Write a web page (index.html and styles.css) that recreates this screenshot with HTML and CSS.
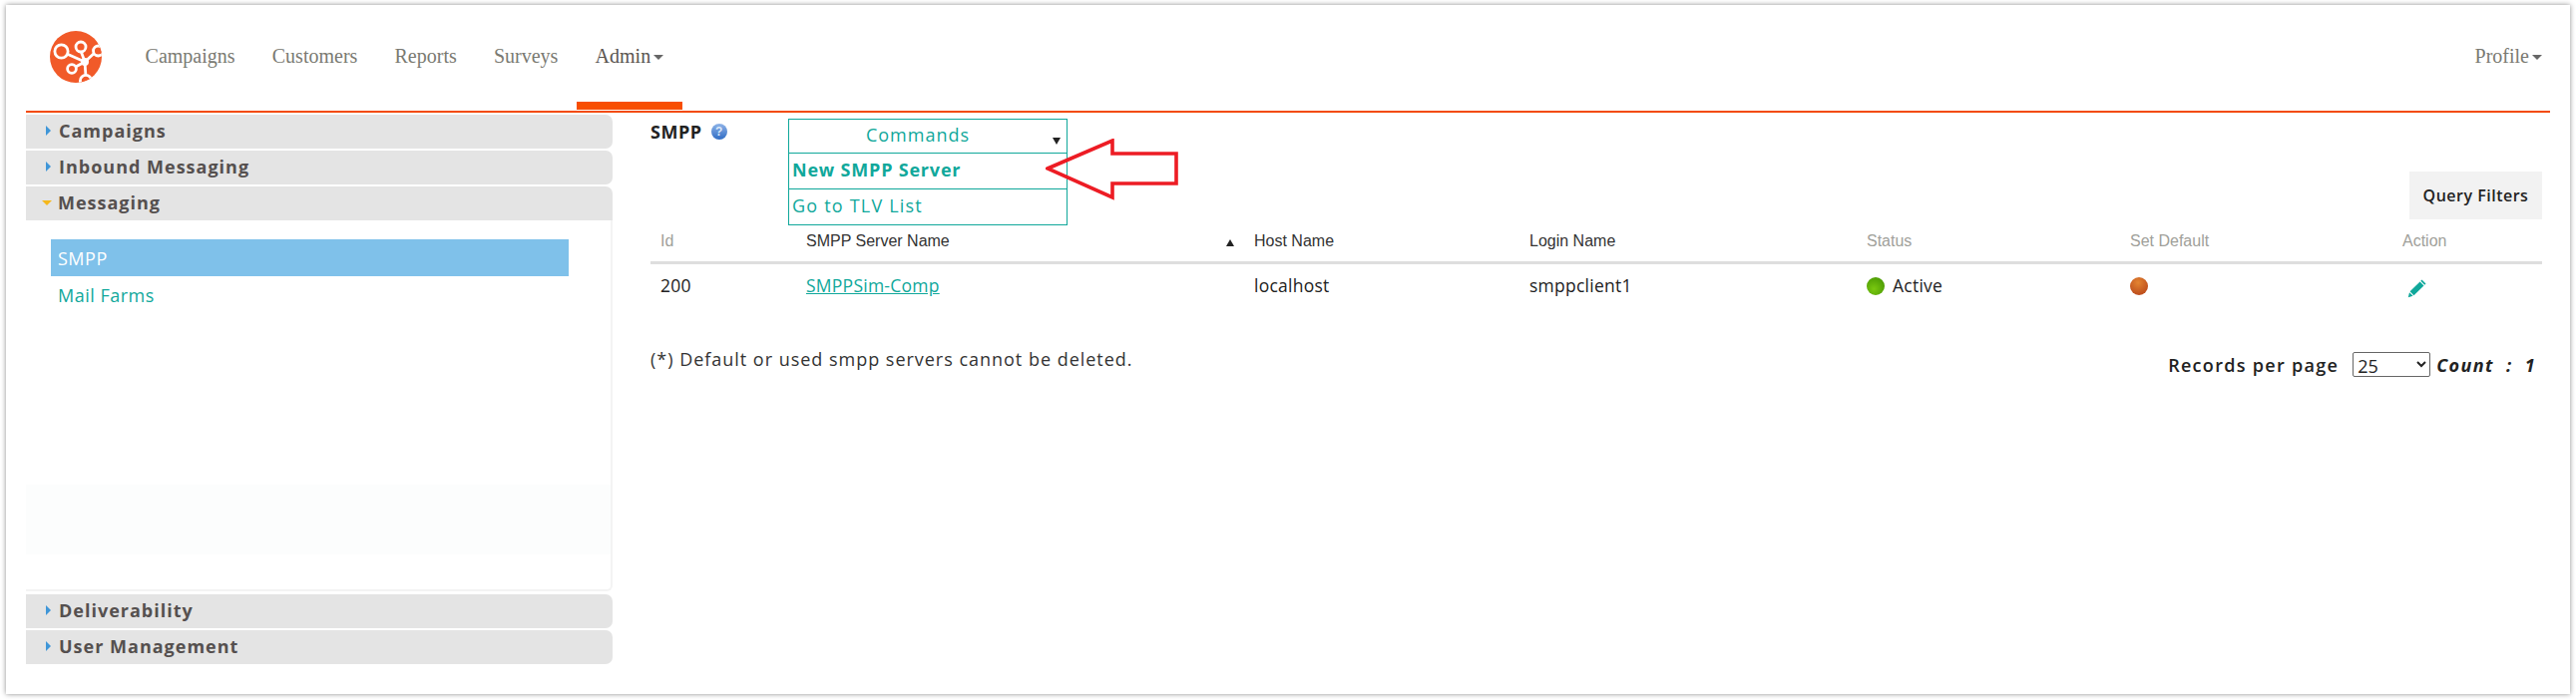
FILE: index.html
```html
<!DOCTYPE html>
<html lang="en">
<head>
<meta charset="utf-8">
<title>SMPP</title>
<link rel="stylesheet" href="styles.css">
</head>
<body>
<div class="card">
  <header class="topbar">
    <svg class="logo" viewBox="0 0 52 52" aria-hidden="true">
      <defs><clipPath id="logoclip"><circle cx="26" cy="26" r="26"/></clipPath></defs>
      <circle cx="26" cy="26" r="26" fill="#f15a29"/>
      <g clip-path="url(#logoclip)" fill="none" stroke="#fff" stroke-width="2.8">
        <path d="M17 23 L35 31 M31 20 L35 31 M24 37 L35 31 M47 20 L35 31 M36 46 L35 31"/>
        <circle cx="11.5" cy="20.5" r="6.6" fill="#f15a29"/>
        <circle cx="31" cy="16" r="5" fill="#f15a29"/>
        <circle cx="22" cy="38" r="4.4" fill="#f15a29"/>
        <circle cx="48.5" cy="20" r="5" fill="#f15a29"/>
        <circle cx="36" cy="50" r="5.6" fill="#f15a29"/>
        <circle cx="35" cy="31" r="4" fill="#fff" stroke="none"/>
      </g>
    </svg>
    <nav class="nav">
      <a class="nav-item">Campaigns</a>
      <a class="nav-item">Customers</a>
      <a class="nav-item">Reports</a>
      <a class="nav-item">Surveys</a>
      <a class="nav-item active">Admin<span class="caret"></span></a>
    </nav>
    <a class="nav-item profile">Profile<span class="caret"></span></a>
  </header>
  <div class="content">
    <aside class="sidebar">
      <div class="acc"><span class="tri"></span>Campaigns</div>
      <div class="acc"><span class="tri"></span>Inbound Messaging</div>
      <div class="acc open"><span class="tri"></span>Messaging</div>
      <div class="panel">
        <div class="side-link selected">SMPP</div>
        <div class="side-link">Mail Farms</div>
        <div class="band"></div>
      </div>
      <div class="acc"><span class="tri"></span>Deliverability</div>
      <div class="acc"><span class="tri"></span>User Management</div>
    </aside>
    <main class="main">
      <div class="toprow">
        <div class="title">SMPP
          <svg class="help" viewBox="0 0 18 18" aria-hidden="true">
            <defs><linearGradient id="hg" x1="0" y1="0" x2="0" y2="1"><stop offset="0" stop-color="#8fb4e8"/><stop offset="1" stop-color="#2f6cc4"/></linearGradient></defs>
            <circle cx="9" cy="9" r="8" fill="url(#hg)"/>
            <text x="9" y="13" text-anchor="middle" class="help-q">?</text>
          </svg>
        </div>
        <div class="commands">
          <div class="cmd-head">Commands<span class="cmd-tri"></span></div>
          <div class="cmd-item strong">New SMPP Server</div>
          <div class="cmd-item">Go to TLV List</div>
        </div>
        <button class="filters">Query Filters</button>
        <svg class="callout" viewBox="0 0 136 62" aria-hidden="true">
          <path d="M2 30 L67 2 L67 15 L131 15 L131 45 L67 45 L67 59 Z" fill="none" stroke="#ed1c24" stroke-width="3.6"/>
        </svg>
      </div>
      <table class="grid">
        <thead>
          <tr>
            <th class="c-id muted">Id</th>
            <th class="c-name">SMPP Server Name<span class="sort"></span></th>
            <th class="c-host">Host Name</th>
            <th class="c-login">Login Name</th>
            <th class="c-status muted">Status</th>
            <th class="c-def muted">Set Default</th>
            <th class="muted">Action</th>
          </tr>
        </thead>
        <tbody>
          <tr>
            <td>200</td>
            <td><a class="link">SMPPSim-Comp</a></td>
            <td>localhost</td>
            <td>smppclient1</td>
            <td><span class="dot green"></span>Active</td>
            <td><span class="dot orange"></span></td>
            <td>
              <svg class="pencil" viewBox="0 0 20 20" aria-hidden="true">
                <path d="M14.5 1.5 L18.5 5.5 L17.3 6.7 L13.3 2.7 Z M12.6 3.5 L16.5 7.4 L6.5 17.2 L2.6 13.3 Z M2 14.2 L5.6 17.8 L0.8 19.2 Z" fill="#10a89b"/>
              </svg>
            </td>
          </tr>
        </tbody>
      </table>
      <div class="footer">
        <div class="note">(*) Default or used smpp servers cannot be deleted.</div>
        <div class="pager">
          <span class="rpp">Records per page</span>
          <select class="size"><option>25</option></select>
          <span class="count">Count&nbsp; :&nbsp; 1</span>
        </div>
      </div>
    </main>
  </div>
</div>
</body>
</html>
```
FILE: styles.css
```css
* { box-sizing: border-box; }
html, body { margin: 0; padding: 0; background: #fff; }
body { width: 2582px; height: 702px; padding: 5px 6px 6px; overflow: hidden; font-family: "Open Sans", "Noto Sans", sans-serif; color: #222; }
.card { height: 691px; background: #fff; padding: 0 20px; box-shadow: 0 0 5px rgba(0,0,0,.45); }

.topbar { display: flex; align-items: flex-start; height: 108px; border-bottom: 2px solid #f34b08; position: relative; }
.logo { width: 52px; height: 52px; margin: 26px 25px 0 24px; flex: none; }
.nav { display: flex; }
.nav-item { display: block; padding: 38px 18.6px 0; height: 105px; border-bottom: 8px solid transparent; font: 20px "Liberation Serif", serif; color: #7a7a72; line-height: 26px; }
.nav-item.active { color: #5a5550; border-bottom-color: #f84e00; }
.profile { margin-left: auto; padding-right: 8px; }
.caret { display: inline-block; width: 0; height: 0; margin-left: 3px; vertical-align: 3px; border: 5px solid transparent; border-top: 5px solid #666; border-bottom: 0; }

.content { display: flex; gap: 38px; padding-top: 2px; }
.sidebar { width: 588px; flex: none; display: flex; flex-direction: column; gap: 2px; }
.acc { height: 34px; background: #e4e4e4; border-radius: 0 7px 7px 0; padding: 0 0 2px 20px; display: flex; align-items: center; font-size: 18px; font-weight: 700; color: #55504f; letter-spacing: 1px; }
.acc.open { border-radius: 0 7px 0 0; }
.tri { width: 0; height: 0; margin-right: 8px; border-left: 5px solid #3f96d8; border-top: 5px solid transparent; border-bottom: 5px solid transparent; }
.open .tri { margin: 0 6px 0 -4px; border-top: 5px solid #f5b81c; border-bottom: 0; border-left: 5px solid transparent; border-right: 5px solid transparent; }
.panel { height: 372px; margin-top: -2px; margin-bottom: 1px; padding: 19px 42px 0 25px; border-right: 2px solid #f3f3f3; border-bottom: 2px solid #f3f3f3; border-radius: 0 0 6px 0; display: flex; flex-direction: column; }
.side-link { height: 37px; padding-left: 7px; display: flex; align-items: center; font-size: 18px; letter-spacing: .5px; color: #10a89b; }
.side-link.selected { background: #7fc1ea; color: #fff; margin-bottom: 0; }
.band { height: 70px; margin: 172px -42px 0 -25px; background: #fcfdfd; }

.main { flex: 1; padding-right: 8px; min-width: 0; }
.toprow { position: relative; height: 109px; display: flex; align-items: flex-start; padding-top: 4px; }
.title { width: 138px; font-size: 18px; font-weight: 700; color: #222; letter-spacing: .5px; display: flex; align-items: center; gap: 8px; line-height: 26px; }
.help { width: 18px; height: 18px; }
.help-q { font: 700 12px "Liberation Sans", sans-serif; fill: #dbe8fa; }
.commands { width: 280px; border: 1px solid #10a89b; font-size: 18px; color: #10a89b; background: #fff; position: relative; z-index: 2; flex: none; }
.cmd-head { height: 33px; text-align: center; line-height: 30px; position: relative; padding-right: 20px; letter-spacing: 1px; }
.cmd-tri { position: absolute; right: 6px; top: 18px; border: 4px solid transparent; border-top: 7px solid #222; border-bottom: 0; }
.cmd-item { height: 36px; border-top: 1px solid #10a89b; padding-left: 3px; line-height: 33px; letter-spacing: 1.2px; }
.cmd-item.strong { font-weight: 700; letter-spacing: .8px; }
.filters { margin: 53px 0 0 auto; width: 133px; height: 48px; border: 0; background: #f2f2f2; font: 600 16px "Open Sans", sans-serif; letter-spacing: .5px; color: #222; padding: 0; }
.callout { position: absolute; left: 396px; top: 24px; width: 136px; height: 62px; z-index: 3; }

.grid { width: 100%; border-collapse: collapse; table-layout: fixed; margin-top: 0; }
.grid th { height: 39px; text-align: left; font: 400 16px "Liberation Sans", sans-serif; color: #333; padding: 0 0 2px 10px; border-bottom: 3px solid #dedede; position: relative; }
.grid th.muted { color: #a0a09a; }
.grid td { height: 44px; padding: 0 0 0 10px; font-size: 17.5px; letter-spacing: .25px; color: #222; vertical-align: middle; }
.c-id { width: 146px; }
.c-name { width: 449px; }
.c-host { width: 276px; }
.c-login { width: 338px; }
.c-status { width: 264px; }
.c-def { width: 273px; }
.sort { position: absolute; right: 10px; top: 16px; border: 4px solid transparent; border-top: 0; border-bottom: 7px solid #222; }
.link { color: #10a89b; text-decoration: underline; }
.dot { display: inline-block; width: 18px; height: 18px; border-radius: 50%; margin-right: 8px; vertical-align: -3px; }
.green { background: radial-gradient(circle at 40% 65%, #7ac80f, #4b9a04 80%, #70b040); }
.orange { background: radial-gradient(circle at 45% 30%, #e38431, #b9471a 85%); }
.pencil { width: 20px; height: 20px; margin: 6px 0 0 5px; display: block; }

.footer { display: flex; justify-content: space-between; align-items: flex-start; padding-top: 41px; }
.note { font-size: 18px; color: #333; letter-spacing: .98px; }
.pager { display: flex; align-items: center; margin-right: 6px; padding-top: 5px; }
.rpp { font-size: 18px; font-weight: 600; color: #222; letter-spacing: 1.3px; }
.size { width: 78px; height: 25px; margin: 0 6px 0 14px; font: 18px "Open Sans", sans-serif; background: #fff; border: 1px solid #666; border-radius: 2px; color: #222; }
.count { font-size: 18px; font-weight: 700; font-style: italic; color: #222; letter-spacing: 1.4px; }
```
